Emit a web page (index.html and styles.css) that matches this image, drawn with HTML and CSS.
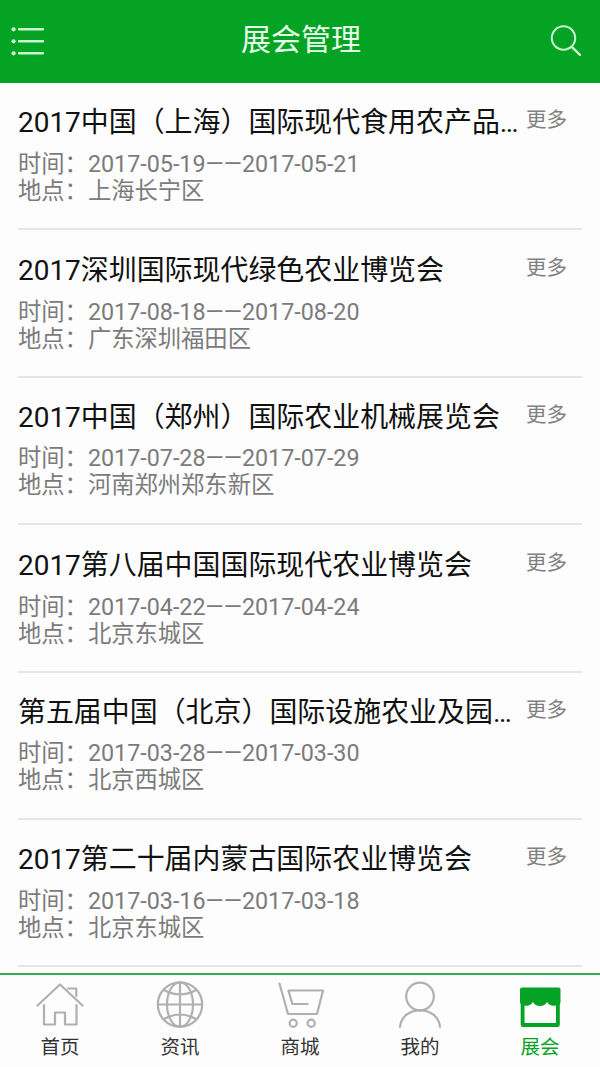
FILE: index.html
```html
<!DOCTYPE html>
<html lang="zh-CN">
<head>
<meta charset="utf-8">
<title>展会管理</title>
<link rel="stylesheet" href="styles.css">
</head>
<body>
<div class="app">
  <header class="header">
    <svg class="menu-icon" width="34" height="30" viewBox="0 0 34 30" fill="none" stroke="#c9f6cf" stroke-width="2.4" stroke-linecap="round">
      <path d="M8 3.3h24M8 15.3h24M8 27.3h24"/>
      <g fill="#c9f6cf" stroke="none"><circle cx="2.6" cy="3.3" r="2.1"/><circle cx="2.6" cy="15.3" r="2.1"/><circle cx="2.6" cy="27.3" r="2.1"/></g>
    </svg>
    <h1 class="heading">展会管理</h1>
    <svg class="search-icon" width="32" height="32" viewBox="0 0 32 32" fill="none" stroke="#c9f6cf" stroke-width="2" stroke-linecap="round">
      <circle cx="13.5" cy="13" r="11.7"/><path d="M21.8 21.8l8.2 8" stroke-width="2.4"/>
    </svg>
  </header>
  <main class="list">
    <article class="item">
      <div class="row"><h2 class="title">2017中国（上海）国际现代食用农产品…</h2><a class="more">更多</a></div>
      <p class="line">时间：2017-05-19——2017-05-21</p>
      <p class="line">地点：上海长宁区</p>
    </article>
    <article class="item">
      <div class="row"><h2 class="title">2017深圳国际现代绿色农业博览会</h2><a class="more">更多</a></div>
      <p class="line">时间：2017-08-18——2017-08-20</p>
      <p class="line">地点：广东深圳福田区</p>
    </article>
    <article class="item">
      <div class="row"><h2 class="title">2017中国（郑州）国际农业机械展览会</h2><a class="more">更多</a></div>
      <p class="line">时间：2017-07-28——2017-07-29</p>
      <p class="line">地点：河南郑州郑东新区</p>
    </article>
    <article class="item">
      <div class="row"><h2 class="title">2017第八届中国国际现代农业博览会</h2><a class="more">更多</a></div>
      <p class="line">时间：2017-04-22——2017-04-24</p>
      <p class="line">地点：北京东城区</p>
    </article>
    <article class="item">
      <div class="row"><h2 class="title">第五届中国（北京）国际设施农业及园…</h2><a class="more">更多</a></div>
      <p class="line">时间：2017-03-28——2017-03-30</p>
      <p class="line">地点：北京西城区</p>
    </article>
    <article class="item">
      <div class="row"><h2 class="title">2017第二十届内蒙古国际农业博览会</h2><a class="more">更多</a></div>
      <p class="line">时间：2017-03-16——2017-03-18</p>
      <p class="line">地点：北京东城区</p>
    </article>
  </main>
  <nav class="tabs">
    <a class="tab">
      <svg class="tab-icon" width="48" height="48" viewBox="0 0 48 48"><path d="M1.500 23.500L24 2.500l22.500 21M8 23v19.500h11V30.500h10v12h11.500V23M32 6.500h8.300V14"/></svg>
      <span>首页</span>
    </a>
    <a class="tab">
      <svg class="tab-icon" width="48" height="48" viewBox="0 0 48 48"><circle cx="24" cy="22.500" r="22.200"/><ellipse cx="24" cy="22.500" rx="13" ry="22.200"/><path d="M24 .5v44M2 22.500h44M8 8q16 9 32 0M8 37q16-9 32 0"/></svg>
      <span>资讯</span>
    </a>
    <a class="tab">
      <svg class="tab-icon" width="48" height="48" viewBox="0 0 48 48"><path d="M3.500 1.500l8.500 30.500h29L47 8.500H12.500L16.300 22h15.500"/><circle cx="17.200" cy="41.200" r="3.600"/><circle cx="35.200" cy="41.200" r="3.600"/></svg>
      <span>商城</span>
    </a>
    <a class="tab">
      <svg class="tab-icon" width="48" height="48" viewBox="0 0 48 48"><circle cx="24" cy="14.500" r="13.800"/><path d="M4 45C5 35 13 28.300 24 28.300S43 35 44 45"/></svg>
      <span>我的</span>
    </a>
    <a class="tab active">
      <svg class="tab-icon" width="48" height="48" viewBox="0 0 48 48"><path class="solid" fill-rule="evenodd" d="M6 5.500h36.500q2 0 2 2V20l-.7 3v19.500q0 2.500-2.300 2.500H7q-2.300 0-2.300-2.500V23L4 20V7.500q0-2 2-2zM8.500 23.500V40q0 1 1 1H39q1 0 1-1V23.500Q33.500 24.500 31 20 29 24 24 24T17 20Q14.500 24.500 8.500 23.500z"/></svg>
      <span>展会</span>
    </a>
  </nav>
</div>
</body>
</html>
```
FILE: styles.css
```css
* { box-sizing: border-box; }
body {
  margin: 0;
  background: #fdfdfd;
  font-family: Roboto, "Noto Sans CJK SC", sans-serif;
}
.app {
  display: flex;
  flex-direction: column;
  height: 1067px;
  overflow: hidden;
}
.header {
  display: flex;
  align-items: center;
  justify-content: space-between;
  flex: none;
  height: 83px;
  padding: 0 18px 3px 11px;
  background: #04a324;
}
.menu-icon { display: block; margin-top: 2px; }
.search-icon { display: block; margin-top: 2px; }
.heading {
  margin: 0 0 0 7px;
  color: #e9ffeb;
  font-size: 30px;
  font-weight: 400;
  line-height: 40px;
}
.list {
  flex: 1;
  min-height: 0;
  padding: 0 18px;
  overflow: hidden;
}
.item {
  height: 147.4px;
  padding-top: 20px;
  border-bottom: 2px solid #e6e6e6;
}
.item:nth-child(2), .item:nth-child(4) { padding-top: 21px; }
.row {
  display: flex;
  justify-content: space-between;
  height: 47.7px;
  padding-right: 15px;
}
.title {
  margin: 0;
  color: #111;
  font-size: 27.95px;
  font-weight: 400;
  line-height: 40px;
  white-space: nowrap;
}
.more {
  color: #808080;
  font-size: 20.5px;
  line-height: 35px;
  white-space: nowrap;
}
.line {
  margin: 0;
  color: #7b7b7b;
  font-size: 23.3px;
  line-height: 27px;
  white-space: nowrap;
}
.tabs {
  display: flex;
  flex: none;
  height: 94px;
  border-top: 2px solid #2fae49;
}
.tab {
  display: flex;
  flex: 1;
  flex-direction: column;
  align-items: center;
  gap: 4px;
  padding-top: 7px;
  color: #333;
  font-size: 19.5px;
  line-height: 28px;
}
.tab-icon {
  display: block;
  overflow: visible;
  fill: none;
  stroke: #b0b0b0;
  stroke-width: 2.2;
  stroke-linejoin: round;
  stroke-linecap: round;
}
.active { color: #04a324; }
.solid { fill: #04a324; stroke: none; }
```
